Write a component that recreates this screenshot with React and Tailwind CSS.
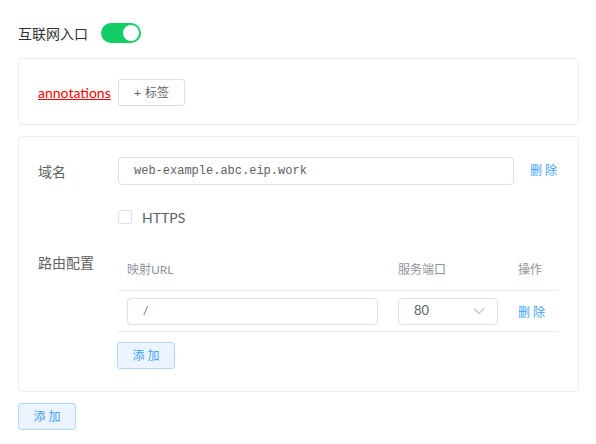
import React from "react";

const font = "font-['Lato','Noto_Sans_CJK_SC',sans-serif]";

const Toggle = () => (
    <div className="relative h-[20px] w-[40px] rounded-full bg-[#13ce66]">
        <span className="absolute right-[2px] top-[2px] h-[16px] w-[16px] rounded-full bg-white" />
    </div>
);

const PlainButton = ({ children, className = "" }) => (
    <button
        className={`h-[27px] rounded-[3px] border border-[#dcdfe6] bg-white text-[12px] text-[#606266] ${className}`}
    >
        {children}
    </button>
);

const AddButton = ({ className = "" }) => (
    <button
        className={`h-[27px] w-[58px] rounded-[3px] border border-[#b3d8ff] bg-[#ecf5ff] text-[12px] text-[#409eff] ${className}`}
    >
        添 加
    </button>
);

const Chevron = () => (
    <svg width="12" height="8" viewBox="0 0 12 8" fill="none">
        <path d="M1 1.5L6 6.5L11 1.5" stroke="#c0c4cc" strokeWidth="1.2" />
    </svg>
);

export default function App() {
    return (
        <div className={`${font} w-[596px] h-[444px] bg-white px-[18px] pt-[23px]`}>
            {/* Header */}
            <div className="flex items-center gap-[13px] h-[20px]">
                <span className="text-[14px] text-[#303133]">互联网入口</span>
                <Toggle />
            </div>

            {/* Annotations card */}
            <div className="mt-[15px] w-[561px] rounded-[4px] border border-[#ebeef5] pl-[19px] pt-[20px] pb-[18px]">
                <div className="flex items-center">
                    <span className="w-[80px] text-[14px] text-[#ff0000] underline underline-offset-1">
                        annotations
                    </span>
                    <PlainButton className="w-[67px]">
                        <span className="mr-[4px]">+</span>标签
                    </PlainButton>
                </div>
            </div>

            {/* Rule card */}
            <div className="mt-[11px] w-[561px] rounded-[4px] border border-[#ebeef5] pl-[19px] pr-[20px] pt-[20px] pb-[22px]">
                <div className="flex items-center h-[28px]">
                    <span className="w-[80px] text-[14px] text-[#606266]">域名</span>
                    <div className="flex h-[28px] w-[396px] items-center rounded-[4px] border border-[#dcdfe6] px-[15px] font-['Liberation_Mono',monospace] text-[12px] text-[#606266]">
                        web-example.abc.eip.work
                    </div>
                    <span className="ml-[16px] text-[12px] text-[#409eff]">删 除</span>
                </div>

                <div className="mt-[18px] flex h-[28px] items-center pl-[80px]">
                    <span className="h-[14px] w-[14px] rounded-[2px] border border-[#dcdfe6] bg-white" />
                    <span className="ml-[10px] text-[14px] text-[#606266]">HTTPS</span>
                </div>

                <div className="mt-[17px] flex">
                    <span className="w-[80px] pt-[1px] text-[14px] leading-[28px] text-[#606266]">路由配置</span>
                    <div className="w-[441px]">
                        <div className="flex h-[43px] items-center border-b border-[#ebeef5] pt-[1px] text-[12px] text-[#909399]">
                            <span className="w-[271px] px-[10px]">映射URL</span>
                            <span className="w-[120px] px-[10px]">服务端口</span>
                            <span className="w-[50px] px-[10px]">操作</span>
                        </div>
                        <div className="flex h-[41px] items-center border-b border-[#ebeef5]">
                            <div className="w-[271px] px-[10px]">
                                <div className="flex h-[27px] items-center rounded-[4px] border border-[#dcdfe6] px-[15px] text-[12px] text-[#606266]">
                                    /
                                </div>
                            </div>
                            <div className="w-[120px] px-[10px]">
                                <div className="flex h-[27px] items-center justify-between rounded-[4px] border border-[#dcdfe6] pl-[15px] pr-[12px] text-[13px] text-[#606266]">
                                    <span>80</span>
                                    <Chevron />
                                </div>
                            </div>
                            <div className="w-[50px] px-[10px]">
                                <span className="whitespace-nowrap text-[12px] text-[#409eff]">删 除</span>
                            </div>
                        </div>
                        <AddButton className="mt-[10px]" />
                    </div>
                </div>
            </div>

            <AddButton className="mt-[11px] w-[57px]" />
        </div>
    );
}
